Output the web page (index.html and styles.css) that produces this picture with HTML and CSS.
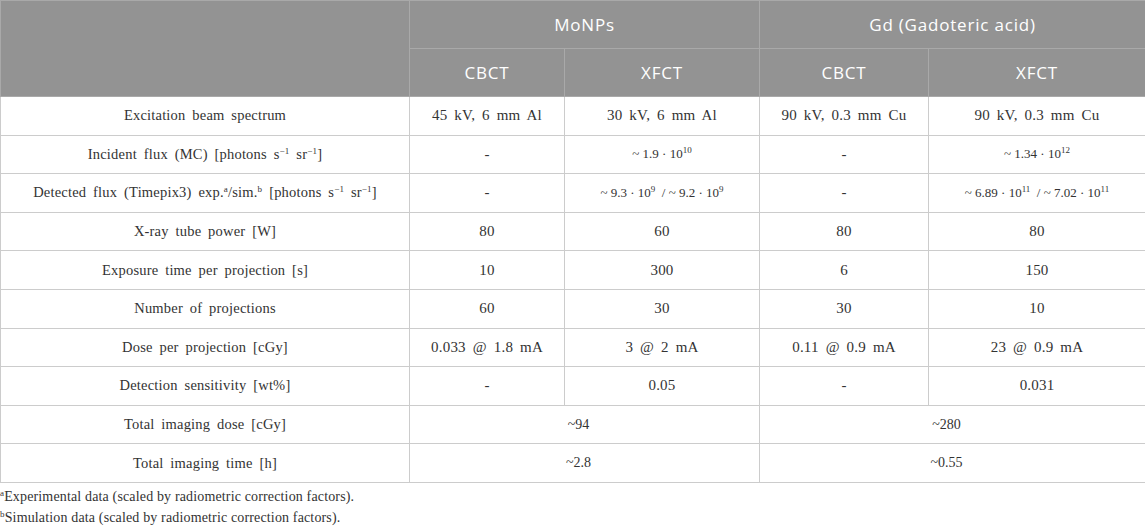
FILE: index.html
```html
<!DOCTYPE html>
<html lang="en">
<head>
  <meta charset="UTF-8" />
  <meta name="viewport" content="width=device-width, initial-scale=1.0" />
  <title>Imaging parameters</title>
  <link rel="stylesheet" href="styles.css">
</head>
<body>

  <table class="params">
    <colgroup>
      <col class="c-label">
      <col class="c-mo1">
      <col class="c-mo2">
      <col class="c-gd1">
      <col class="c-gd2">
    </colgroup>
    <thead>
      <tr class="group-row">
        <th rowspan="2"></th>
        <th colspan="2">MoNPs</th>
        <th colspan="2">Gd (Gadoteric acid)</th>
      </tr>
      <tr class="mode-row">
        <th>CBCT</th>
        <th>XFCT</th>
        <th>CBCT</th>
        <th>XFCT</th>
      </tr>
    </thead>
    <tbody>
      <tr>
        <td class="label">Excitation beam spectrum</td>
        <td>45 kV, 6 mm Al</td>
        <td>30 kV, 6 mm Al</td>
        <td>90 kV, 0.3 mm Cu</td>
        <td>90 kV, 0.3 mm Cu</td>
      </tr>
      <tr>
        <td class="label">Incident flux (MC) [photons s<sup>−1</sup> sr<sup>−1</sup>]</td>
        <td>-</td>
        <td class="num">~ 1.9 · 10<sup>10</sup></td>
        <td>-</td>
        <td class="num">~ 1.34 · 10<sup>12</sup></td>
      </tr>
      <tr>
        <td class="label">Detected flux (Timepix3) exp.<sup>a</sup>/sim.<sup>b</sup> [photons s<sup>−1</sup> sr<sup>−1</sup>]</td>
        <td>-</td>
        <td class="num">~ 9.3 · 10<sup>9</sup> &nbsp;/ ~ 9.2 · 10<sup>9</sup></td>
        <td>-</td>
        <td class="num">~ 6.89 · 10<sup>11</sup> &nbsp;/ ~ 7.02 · 10<sup>11</sup></td>
      </tr>
      <tr>
        <td class="label">X-ray tube power [W]</td>
        <td>80</td>
        <td>60</td>
        <td>80</td>
        <td>80</td>
      </tr>
      <tr>
        <td class="label">Exposure time per projection [s]</td>
        <td>10</td>
        <td>300</td>
        <td>6</td>
        <td>150</td>
      </tr>
      <tr>
        <td class="label">Number of projections</td>
        <td>60</td>
        <td>30</td>
        <td>30</td>
        <td>10</td>
      </tr>
      <tr>
        <td class="label">Dose per projection [cGy]</td>
        <td>0.033 @ 1.8 mA</td>
        <td>3 @ 2 mA</td>
        <td>0.11 @ 0.9 mA</td>
        <td>23 @ 0.9 mA</td>
      </tr>
      <tr>
        <td class="label">Detection sensitivity [wt%]</td>
        <td>-</td>
        <td>0.05</td>
        <td>-</td>
        <td>0.031</td>
      </tr>
      <tr>
        <td class="label">Total imaging dose [cGy]</td>
        <td colspan="2" class="num total">~94</td>
        <td colspan="2" class="num total">~280</td>
      </tr>
      <tr>
        <td class="label">Total imaging time [h]</td>
        <td colspan="2" class="num total">~2.8</td>
        <td colspan="2" class="num total">~0.55</td>
      </tr>
    </tbody>
  </table>

  <div class="notes">
    <p><sup>a</sup>Experimental data (scaled by radiometric correction factors).</p>
    <p><sup>b</sup>Simulation data (scaled by radiometric correction factors).</p>
  </div>

</body>
</html>
```

FILE: styles.css
```css
body {
  margin: 0;
  background-color: white;
  color: #333;
  font-family: "Liberation Serif", "Times New Roman", serif;
}

.params {
  width: 1145px;
  border-collapse: collapse;
  table-layout: fixed;
}

.c-label { width: 409px; }
.c-mo1 { width: 155px; }
.c-mo2 { width: 195px; }
.c-gd1 { width: 169px; }
.c-gd2 { width: 217px; }

.params th {
  height: 47px;
  padding: 0;
  background-color: #939393;
  border: 1px solid #a9a9a9;
  color: white;
  font-family: "Open Sans", "Noto Sans", sans-serif;
  font-size: 17px;
  letter-spacing: 0.8px;
  font-weight: normal;
  text-align: center;
}

.params td {
  height: 37.6px;
  padding: 0 4px;
  border: 1px solid #cccccc;
  text-align: center;
  font-size: 15px;
  word-spacing: 3px;
  letter-spacing: 0.2px;
  vertical-align: middle;
  white-space: nowrap;
}

.params td.label {
  font-size: 14.5px;
  word-spacing: 3px;
}

.params td.num {
  font-size: 13px;
  word-spacing: 0;
  letter-spacing: 0;
}

.params td.total {
  font-size: 14px;
  padding-right: 16px;
}

sup {
  font-size: 9px;
  line-height: 0;
  vertical-align: 5px;
  word-spacing: 0;
}

.notes {
  padding-top: 4px;
  font-size: 14px;
  letter-spacing: 0.15px;
}

.notes p {
  margin: 0 0 1px 0;
  line-height: 20px;
}

.notes sup {
  font-size: 9px;
  vertical-align: 5px;
}
```
